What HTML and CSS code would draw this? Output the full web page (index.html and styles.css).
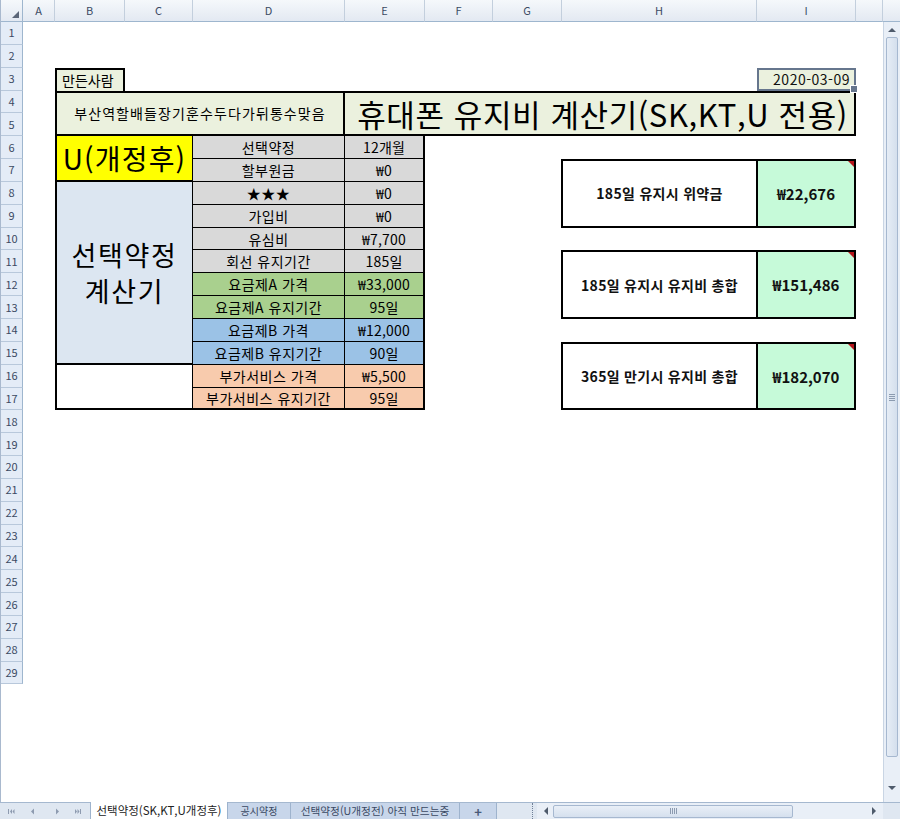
FILE: index.html
```html
<!DOCTYPE html>
<html lang="ko">
<head>
<meta charset="utf-8">
<title>휴대폰 유지비 계산기</title>
<link rel="stylesheet" href="styles.css">
</head>
<body>
<div class="window">
  <div class="main">
    <div class="sheet">
      <div class="ch corner"></div>
      <div class="ch">A</div>
      <div class="ch">B</div>
      <div class="ch">C</div>
      <div class="ch">D</div>
      <div class="ch">E</div>
      <div class="ch">F</div>
      <div class="ch">G</div>
      <div class="ch">H</div>
      <div class="ch">I</div>
      <div class="ch"></div>

      <div class="rh">1</div><div class="rh">2</div><div class="rh">3</div><div class="rh">4</div><div class="rh">5</div>
      <div class="rh">6</div><div class="rh">7</div><div class="rh">8</div><div class="rh">9</div><div class="rh">10</div>
      <div class="rh">11</div><div class="rh">12</div><div class="rh">13</div><div class="rh">14</div><div class="rh">15</div>
      <div class="rh">16</div><div class="rh">17</div><div class="rh">18</div><div class="rh">19</div><div class="rh">20</div>
      <div class="rh">21</div><div class="rh">22</div><div class="rh">23</div><div class="rh">24</div><div class="rh">25</div>
      <div class="rh">26</div><div class="rh">27</div><div class="rh">28</div><div class="rh">29</div>

      <div class="maker">만든사람</div>
      <div class="date">2020-03-09</div>
      <div class="subtitle">부산역할배들장기훈수두다가뒤통수맞음</div>
      <div class="title">휴대폰 유지비 계산기(SK,KT,U 전용)</div>

      <div class="table">
        <div class="carrier">U(개정후)</div>
        <div class="calc">선택약정<br>계산기</div>
        <div class="blank"></div>

        <div class="lb gray">선택약정</div><div class="vl gray">12개월</div>
        <div class="lb gray">할부원금</div><div class="vl gray">₩0</div>
        <div class="lb gray">★★★</div><div class="vl gray">₩0</div>
        <div class="lb gray">가입비</div><div class="vl gray">₩0</div>
        <div class="lb gray">유심비</div><div class="vl gray">₩7,700</div>
        <div class="lb gray">회선 유지기간</div><div class="vl gray">185일</div>
        <div class="lb green">요금제A 가격</div><div class="vl green">₩33,000</div>
        <div class="lb green">요금제A 유지기간</div><div class="vl green">95일</div>
        <div class="lb blue">요금제B 가격</div><div class="vl blue">₩12,000</div>
        <div class="lb blue">요금제B 유지기간</div><div class="vl blue">90일</div>
        <div class="lb orange">부가서비스 가격</div><div class="vl orange">₩5,500</div>
        <div class="lb orange last">부가서비스 유지기간</div><div class="vl orange last">95일</div>
      </div>

      <div class="rbox box1">
        <div class="rlabel">185일 유지시 위약금</div>
        <div class="rvalue">₩22,676</div>
      </div>
      <div class="rbox box2">
        <div class="rlabel">185일 유지시 유지비 총합</div>
        <div class="rvalue">₩151,486</div>
      </div>
      <div class="rbox box3">
        <div class="rlabel">365일 만기시 유지비 총합</div>
        <div class="rvalue">₩182,070</div>
      </div>
    </div>

    <div class="vscroll">
      <div class="vs-head"></div>
      <div class="vs-track">
        <div class="arrow up"></div>
        <div class="vthumb"><span class="hgrip"></span></div>
        <div class="arrow down"></div>
      </div>
    </div>
  </div>

  <div class="bottombar">
    <div class="nav">
      <svg width="90" height="17" viewBox="0 0 90 17">
        <g fill="#8e9bb0">
          <rect x="8" y="6" width="1" height="5"/>
          <path d="M10 8.5 L12 6 L12 11 Z"/>
          <path d="M12.5 8.5 L14.5 6 L14.5 11 Z"/>
          <path d="M31 8.5 L34 5.5 L34 11.5 Z"/>
          <path d="M56 5.5 L59 8.5 L56 11.5 Z"/>
          <path d="M75 6 L77 8.5 L75 11 Z"/>
          <path d="M77.5 6 L79.5 8.5 L77.5 11 Z"/>
          <rect x="80" y="6" width="1" height="5"/>
        </g>
      </svg>
    </div>
    <div class="tab active">선택약정(SK,KT,U개정후)</div>
    <div class="tab t2">공시약정</div>
    <div class="tab t3">선택약정(U개정전) 아직 만드는중</div>
    <div class="tab plus">+</div>
    <div class="tabfill"></div>
    <div class="splitter"></div>
    <div class="hscroll">
      <div class="arrow left"></div>
      <div class="hthumb"><span class="vgrip"></span></div>
      <div class="arrow right"></div>
    </div>
    <div class="sbcorner"></div>
  </div>
</div>
</body>
</html>
```

FILE: styles.css
```css
* { box-sizing: border-box; }

html, body {
  margin: 0;
  padding: 0;
}

body {
  width: 900px;
  height: 819px;
  overflow: hidden;
  background: #ffffff;
  font-family: "Noto Sans CJK KR", "Noto Sans", sans-serif;
  color: #000;
}

.window {
  width: 900px;
  height: 819px;
  display: flex;
  flex-direction: column;
}

.main {
  flex: 1;
  display: flex;
  min-height: 0;
}

/* ---------- sheet grid ---------- */
.sheet {
  flex: 1;
  display: grid;
  grid-template-columns: 22px 32px 70px 68px 152px 80px 68px 69px 195px 99px 1fr;
  grid-template-rows: 22px repeat(29, 22.857px) 1fr;
  border-left: 1px solid #a9b9ce;
  background: #fff;
}

.ch {
  background: linear-gradient(#f5f8fb, #e3e9f2);
  border-right: 1px solid #c3cfdd;
  border-bottom: 1px solid #9eb6ce;
  font-size: 11px;
  color: #3b4a63;
  display: flex;
  align-items: center;
  justify-content: center;
  line-height: 1;
}

.corner {
  position: relative;
  border-right: 1px solid #9eb6ce;
}

.corner::after {
  content: "";
  position: absolute;
  right: 3px;
  bottom: 3px;
  width: 0;
  height: 0;
  border-left: 7px solid transparent;
  border-bottom: 7px solid #5b6678;
}

.rh {
  grid-column: 1;
  background: #e4ecf7;
  border-right: 1px solid #9eb6ce;
  border-bottom: 1px solid #b8c8db;
  font-size: 11px;
  color: #3b4a63;
  display: flex;
  align-items: center;
  justify-content: center;
  line-height: 1;
}

/* ---------- top boxes ---------- */
.maker {
  grid-column: 3;
  grid-row: 4;
  background: #ebf1de;
  border: 2px solid #000;
  border-bottom: none;
  font-size: 14px;
  line-height: 1;
  display: flex;
  align-items: center;
  padding-left: 5px;
}

.date {
  grid-column: 10;
  grid-row: 4;
  position: relative;
  background: #ebf1de;
  border: 2px solid #66768d;
  font-size: 14px;
  letter-spacing: 0.5px;
  line-height: 1;
  display: flex;
  align-items: center;
  justify-content: flex-end;
  padding-right: 4px;
  color: #111;
}

.date::after {
  content: "";
  position: absolute;
  right: -4px;
  bottom: -4px;
  width: 6px;
  height: 6px;
  background: #66768d;
  border: 1px solid #fff;
}

.subtitle {
  grid-column: 3 / 6;
  grid-row: 5 / 7;
  background: #ebf1de;
  border: 2px solid #000;
  font-size: 14px;
  line-height: 1;
  display: flex;
  align-items: center;
  justify-content: center;
  letter-spacing: 1.1px;
}

.title {
  grid-column: 6 / 11;
  grid-row: 5 / 7;
  background: #ebf1de;
  border: 2px solid #000;
  border-left: none;
  font-size: 31px;
  letter-spacing: 0.6px;
  line-height: 1;
  display: flex;
  align-items: center;
  justify-content: center;
  padding-left: 6px;
  white-space: nowrap;
}

/* ---------- left table ---------- */
.table {
  grid-column: 3 / 7;
  grid-row: 7 / 19;
  display: grid;
  grid-template-columns: 138px 152px 80px;
  grid-template-rows: repeat(12, 1fr);
}

.table > div {
  display: flex;
  align-items: center;
  justify-content: center;
  line-height: 1;
  white-space: nowrap;
}

.carrier {
  grid-column: 1;
  grid-row: 1 / 3;
  background: #ffff00;
  border-left: 2px solid #000;
  border-right: 1px solid #000;
  border-bottom: 2px solid #000;
  font-size: 28px;
  letter-spacing: 1.2px;
}

.calc {
  grid-column: 1;
  grid-row: 3 / 11;
  background: #dce6f1;
  border-left: 2px solid #000;
  border-right: 1px solid #000;
  border-bottom: 2px solid #000;
  font-size: 27px;
  letter-spacing: 1.6px;
  text-align: center;
  padding-top: 2px;
}

.table > .calc {
  line-height: 36px;
}

.blank {
  grid-column: 1;
  grid-row: 11 / 13;
  background: #fff;
  border-left: 2px solid #000;
  border-right: 1px solid #000;
  border-bottom: 2px solid #000;
}

.lb, .vl {
  font-size: 14px;
  border-bottom: 1px solid #000;
  border-right: 1px solid #000;
}

.lb {
  letter-spacing: 0.5px;
}

.vl {
  border-right: 2px solid #000;
  letter-spacing: 0.2px;
}

.last {
  border-bottom: 2px solid #000;
}

.gray { background: #d9d9d9; }
.green { background: #a9d08e; }
.blue { background: #9bc2e6; }
.orange { background: #f8cbad; }

/* ---------- right boxes ---------- */
.rbox {
  grid-column: 9 / 11;
  display: grid;
  grid-template-columns: 195px 1fr;
  border: 2px solid #000;
  margin-left: -1px;
}

.box1 { grid-row: 8 / 11; }
.box2 { grid-row: 12 / 15; }
.box3 { grid-row: 16 / 19; }

.rlabel {
  border-right: 2px solid #000;
  display: flex;
  align-items: center;
  justify-content: center;
  font-size: 14px;
  font-weight: bold;
  letter-spacing: 0.3px;
  line-height: 1;
  color: #111;
}

.rvalue {
  position: relative;
  background: #c6fad9;
  display: flex;
  align-items: center;
  justify-content: center;
  font-size: 15px;
  font-weight: bold;
  line-height: 1;
  color: #111;
}

.rvalue::after {
  content: "";
  position: absolute;
  top: 0;
  right: 0;
  width: 0;
  height: 0;
  border-left: 6px solid transparent;
  border-top: 6px solid #b4161b;
}

/* ---------- vertical scrollbar ---------- */
.vscroll {
  width: 17px;
  display: flex;
  flex-direction: column;
}

.vs-head {
  height: 22px;
  background: linear-gradient(#f5f8fb, #e3e9f2);
  border-bottom: 1px solid #9eb6ce;
}

.vs-track {
  flex: 1;
  background: #e9eff7;
  border-left: 1px solid #c9d5e4;
  display: flex;
  flex-direction: column;
  align-items: center;
  padding: 0 1px;
}

.arrow {
  width: 0;
  height: 0;
  flex: none;
}

.arrow.up {
  margin: 6px 0 5px;
  border-left: 4px solid transparent;
  border-right: 4px solid transparent;
  border-bottom: 4px solid #4f5b6c;
}

.arrow.down {
  margin: 29px 0 6px;
  border-left: 4px solid transparent;
  border-right: 4px solid transparent;
  border-top: 4px solid #4f5b6c;
}

.vthumb {
  width: 12px;
  height: 720px;
  flex: none;
  background: linear-gradient(90deg, #e6edf6, #d4dfed);
  border: 1px solid #a6b8d0;
  border-radius: 2px;
  display: flex;
  align-items: center;
  justify-content: center;
}

.hgrip {
  width: 6px;
  height: 7px;
  background: repeating-linear-gradient(#8c9bb0 0 1px, transparent 1px 2px);
}

/* ---------- bottom bar ---------- */
.bottombar {
  height: 17px;
  flex: none;
  display: flex;
  background: #dfe7f1;
  border-top: 1px solid #a5b8cf;
  font-size: 10.7px;
  line-height: 1;
}

.nav {
  width: 90px;
  flex: none;
  display: flex;
}

.tab {
  flex: none;
  display: flex;
  align-items: center;
  justify-content: center;
  background: #c8d6ea;
  color: #3a4963;
  border-right: 1px solid #9eb3cd;
  white-space: nowrap;
  overflow: hidden;
}

.tab.active {
  width: 138px;
  background: #ffffff;
  color: #222;
  border-left: 1px solid #9eb3cd;
  margin-top: -1px;
  font-size: 11.5px;
}

.tab.t2 { width: 63px; font-size: 10px; }
.tab.t3 { width: 169px; }

.tab.plus {
  width: 37px;
  font-size: 13px;
  font-weight: bold;
  color: #4a5a78;
}

.tabfill {
  width: 33px;
  flex: none;
}

.splitter {
  width: 5px;
  flex: none;
  border-left: 1px dotted #6f7f97;
  margin-left: 2px;
}

.hscroll {
  flex: 1;
  display: flex;
  align-items: center;
  background: #e9eff7;
}

.arrow.left {
  margin: 0 5px 0 7px;
  border-top: 4px solid transparent;
  border-bottom: 4px solid transparent;
  border-right: 4px solid #4f5b6c;
}

.hthumb {
  width: 240px;
  height: 13px;
  flex: none;
  background: linear-gradient(#e9eff7, #d5e0ee);
  border: 1px solid #a6b8d0;
  border-radius: 2px;
  display: flex;
  align-items: center;
  justify-content: center;
}

.vgrip {
  width: 7px;
  height: 6px;
  background: repeating-linear-gradient(90deg, #8c9bb0 0 1px, transparent 1px 2px);
}

.arrow.right {
  margin-left: auto;
  margin-right: 7px;
  border-top: 4px solid transparent;
  border-bottom: 4px solid transparent;
  border-left: 4px solid #4f5b6c;
}

.sbcorner {
  width: 17px;
  flex: none;
  background: #dfe7f1;
}
```
